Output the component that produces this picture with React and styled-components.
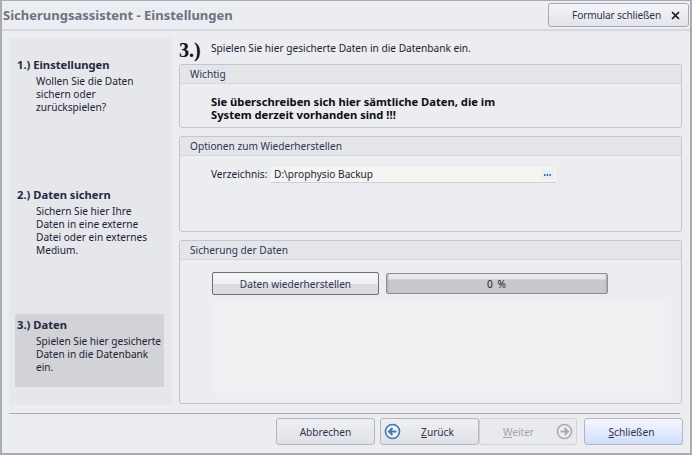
import React from "react";
import styled, { createGlobalStyle } from "styled-components";

const GlobalStyle = createGlobalStyle`
  html, body { margin: 0; padding: 0; background: #e9ebef; }
  * { box-sizing: border-box; }
`;

const Window = styled.div`
  width: 692px;
  height: 455px;
  display: flex;
  flex-direction: column;
  background: #ebedf1;
  border: 1px solid #a9abb2;
  border-width: 1px 2px 2px 2px;
  font-family: "Noto Sans", "Liberation Sans", sans-serif;
  font-size: 10.15px;
  color: #1c2233;
  overflow: hidden;
`;

const TitleBar = styled.div`
  height: 30px;
  flex: none;
  display: flex;
  align-items: center;
  justify-content: space-between;
  padding: 0 1px;
  border-bottom: 2px solid #d6d8de;
`;

const Title = styled.div`
  font-weight: bold;
  font-size: 13px;
  color: #6b7384;
`;

const CloseFormButton = styled.button`
  width: 141px;
  height: 24px;
  display: flex;
  align-items: center;
  justify-content: flex-end;
  gap: 10px;
  padding: 0 8px 0 0;
  border: 1px solid #a5a8ae;
  border-radius: 3px;
  background: linear-gradient(#f4f5f8, #e2e4ea);
  font: inherit;
  letter-spacing: -0.15px;
  color: #2c3550;
`;

const Body = styled.div`
  flex: 1;
  display: flex;
  gap: 7px;
  padding: 7px 8px 0 7px;
  min-height: 0;
`;

const Sidebar = styled.div`
  width: 163px;
  height: 367px;
  flex: none;
  display: flex;
  flex-direction: column;
  background: #e5e7eb;
  padding: 0 8px 0 6px;
`;

const Step = styled.div`
  height: ${(p) => p.$height}px;
  flex: none;
  padding-top: ${(p) => p.$pad}px;
  padding-left: 2px;
  background: ${(p) => (p.$active ? "#d1d3d6" : "transparent")};
`;

const StepTitle = styled.div`
  font-weight: bold;
  font-size: 11.2px;
  line-height: 13px;
  color: #232a40;
`;

const StepText = styled.div`
  margin: 4px 0 0 19px;
  line-height: 13px;
  white-space: pre-line;
`;

const Main = styled.div`
  flex: 1;
  display: flex;
  flex-direction: column;
  min-width: 0;
`;

const Heading = styled.div`
  height: 26px;
  flex: none;
  display: flex;
  align-items: flex-start;
`;

const BigNumber = styled.span`
  width: 32px;
  font-family: "Liberation Serif", serif;
  font-weight: bold;
  font-size: 20px;
  line-height: 24px;
  color: #111;
`;

const HeadingText = styled.span`
  line-height: 20px;
`;

const Panel = styled.section`
  height: ${(p) => p.$height}px;
  flex: none;
  margin-bottom: 8px;
  border: 1px solid #c4c6cb;
  border-radius: 3px;
  display: flex;
  flex-direction: column;
  overflow: hidden;
`;

const PanelHeader = styled.div`
  height: 19px;
  flex: none;
  padding-left: 10px;
  line-height: 18px;
  background: #e3e5e9;
  border-bottom: 1px solid #d6d8dc;
  color: #2c3550;
`;

const Warning = styled.div`
  padding: 11px 0 0 31px;
  font-weight: bold;
  font-size: 11.2px;
  line-height: 13px;
  color: #0d0d10;
  white-space: pre-line;
`;

const FieldRow = styled.div`
  display: flex;
  align-items: flex-start;
  padding: 11px 0 0 31px;
  line-height: 15px;
`;

const FieldLabel = styled.span`
  width: 60px;
  flex: none;
`;

const PathInput = styled.div`
  width: 285px;
  height: 15px;
  display: flex;
  justify-content: space-between;
  align-items: center;
  padding: 0 2px 0 3px;
  background: #f4f5f1;
  box-shadow: 0 1px 0 #ced0d5;
`;

const BrowseButton = styled.span`
  width: 13px;
  height: 11px;
  display: flex;
  align-items: center;
  justify-content: center;
  background: #eceef2;
`;

const SaveBody = styled.div`
  flex: 1;
  padding: 12px 10px 10px 32px;
  display: flex;
  flex-direction: column;
  gap: 7px;
`;

const ActionRow = styled.div`
  display: flex;
  align-items: center;
  gap: 7px;
`;

const RestoreButton = styled.button`
  width: 167px;
  height: 23px;
  padding: 0;
  border: 1px solid #6e7076;
  border-radius: 2px;
  background: linear-gradient(#f3f4f6 0%, #f0f1f3 50%, #dcdee1 52%, #d8dadd 100%);
  font: inherit;
  color: #2c3550;
`;

const Progress = styled.div`
  width: 222px;
  height: 21px;
  border: 1px solid #8d8f94;
  border-radius: 2px;
  background: linear-gradient(#ebecee 0%, #e4e5e7 27%, #c8c9ca 30%, #c8c9ca 100%);
  box-shadow: inset 2px 0 2px -1px #a8a9ab, inset -2px 0 2px -1px #a8a9ab;
  text-align: center;
  line-height: 20px;
  letter-spacing: 1px;
  color: #222;
`;

const LogArea = styled.div`
  flex: 1;
  margin-left: 1px;
  background: #f0f0f2;
`;

const Footer = styled.div`
  flex: none;
  margin: 0 7px 0 7px;
  padding: 5px 0 7px;
  display: flex;
  justify-content: flex-end;
  height: 40px;
  background: linear-gradient(#a8aab0, #a8aab0) no-repeat 0 0 / 671px 1px;
`;

const FooterButton = styled.button`
  width: ${(p) => p.$width}px;
  height: 27px;
  display: flex;
  align-items: center;
  justify-content: center;
  padding: ${(p) => p.$padding || "0"};
  margin-left: ${(p) => p.$gap || 0}px;
  border: 1px solid ${(p) => (p.$disabled ? "#cfd1d6" : "#b4b6bc")};
  border-radius: 3px;
  background: ${(p) =>
    p.$primary
      ? "linear-gradient(#f6f8fd, #cfdcfb)"
      : p.$disabled
      ? "#e8eaee"
      : "linear-gradient(#eef0f3, #dfe1e6)"};
  font: inherit;
  color: ${(p) => (p.$disabled ? "#a2a5ad" : "#2c3550")};
`;

const ButtonLabel = styled.span`
  flex: 1;
  text-align: center;
  padding: ${(p) => p.$padding || "0"};
`;

const Key = styled.span`
  text-decoration: underline;
`;

const CircleArrow = ({ dir, color, fill }) => (
  <svg width="17" height="17" viewBox="0 0 17 17">
    <circle cx="8.5" cy="8.5" r="7" fill={fill} stroke={color} strokeWidth="1.6" />
    <path
      d={dir === "left" ? "M12.5 8.5H5.5M8.5 5L5 8.5L8.5 12" : "M4.5 8.5H11.5M8.5 5L12 8.5L8.5 12"}
      fill="none"
      stroke={color}
      strokeWidth="2"
    />
  </svg>
);

const steps = [
  { title: "1.) Einstellungen", text: "Wollen Sie die Daten\nsichern oder\nzurückspielen?", height: 131, pad: 20 },
  { title: "2.) Daten sichern", text: "Sichern Sie hier Ihre\nDaten in eine externe\nDatei oder ein externes\nMedium.", height: 145, pad: 19 },
  { title: "3.) Daten", text: "Spielen Sie hier gesicherte\nDaten in die Datenbank\nein.", height: 73, pad: 4, active: true },
];

export default function App() {
  return (
    <>
      <GlobalStyle />
      <Window>
        <TitleBar>
          <Title>Sicherungsassistent - Einstellungen</Title>
          <CloseFormButton>
            Formular schließen
            <svg width="9" height="9" viewBox="0 0 9 9">
              <path d="M1 1L8 8M8 1L1 8" stroke="#15171c" strokeWidth="1.7" fill="none" />
            </svg>
          </CloseFormButton>
        </TitleBar>
        <Body>
          <Sidebar>
            {steps.map((s) => (
              <Step key={s.title} $height={s.height} $pad={s.pad} $active={s.active}>
                <StepTitle>{s.title}</StepTitle>
                <StepText>{s.text}</StepText>
              </Step>
            ))}
          </Sidebar>
          <Main>
            <Heading>
              <BigNumber>3.)</BigNumber>
              <HeadingText>Spielen Sie hier gesicherte Daten in die Datenbank ein.</HeadingText>
            </Heading>
            <Panel $height={64}>
              <PanelHeader>Wichtig</PanelHeader>
              <Warning>
                {"Sie überschreiben sich hier sämtliche Daten, die im\nSystem derzeit vorhanden sind !!!"}
              </Warning>
            </Panel>
            <Panel $height={96}>
              <PanelHeader>Optionen zum Wiederherstellen</PanelHeader>
              <FieldRow>
                <FieldLabel>Verzeichnis:</FieldLabel>
                <PathInput>
                  D:\prophysio Backup
                  <BrowseButton>
                    <svg width="7" height="2" viewBox="0 0 7 2">
                      <path d="M0 0h1.5v2H0zM2.7 0h1.5v2H2.7zM5.4 0h1.5v2H5.4z" fill="#1f6fc0" />
                    </svg>
                  </BrowseButton>
                </PathInput>
              </FieldRow>
            </Panel>
            <Panel $height={164}>
              <PanelHeader>Sicherung der Daten</PanelHeader>
              <SaveBody>
                <ActionRow>
                  <RestoreButton>Daten wiederherstellen</RestoreButton>
                  <Progress>0 %</Progress>
                </ActionRow>
                <LogArea />
              </SaveBody>
            </Panel>
          </Main>
        </Body>
        <Footer>
          <FooterButton $width={99}>Abbrechen</FooterButton>
          <FooterButton $width={99} $gap={5} $padding="0 4px 0 3px">
            <CircleArrow dir="left" color="#3a78bd" fill="#f4f6fa" />
            <ButtonLabel>
              <Key>Z</Key>urück
            </ButtonLabel>
          </FooterButton>
          <FooterButton $width={98} $padding="0 3px 0 4px" $disabled>
            <ButtonLabel $padding="0 3px 0 0">
              <Key>W</Key>eiter
            </ButtonLabel>
            <CircleArrow dir="right" color="#a9abaf" fill="#eceef1" />
          </FooterButton>
          <FooterButton $width={99} $gap={7} $padding="0 4px 0 0" $primary>
            <span>
              <Key>S</Key>chließen
            </span>
          </FooterButton>
        </Footer>
      </Window>
    </>
  );
}
